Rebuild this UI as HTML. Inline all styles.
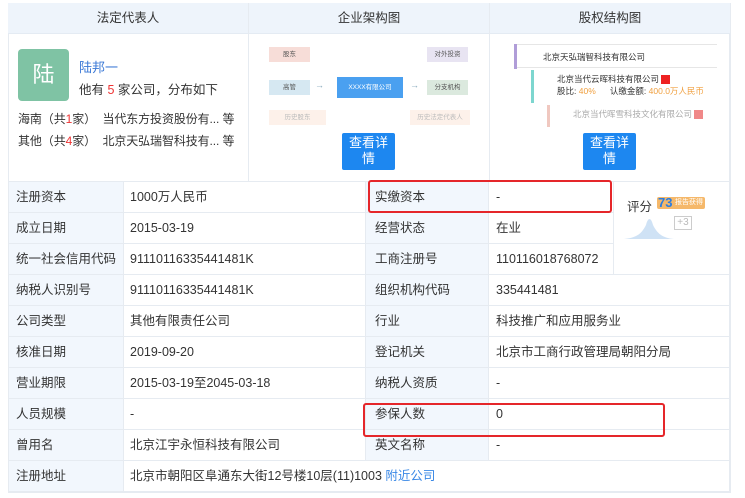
<!DOCTYPE html>
<html><head><meta charset="utf-8"><style>
body{margin:0;width:745px;height:498px;background:#fff;font-family:"Liberation Sans","Noto Sans CJK SC",sans-serif;font-size:12.5px;color:#333;overflow:hidden;position:relative}
.a{position:absolute}
.hd{top:3px;height:30px;background:#eef4fb;border-bottom:1px solid #e4ebf3;line-height:30px;text-align:center;font-size:12.5px;color:#333}
.vl{width:1px;background:#e6ebf1}
.hl{height:1px;background:#e6ebf1}
.lab{background:#f2f7fd}
.t{position:absolute;line-height:31px;font-size:12.5px;white-space:nowrap}
.btn{background:#1d87f0;color:#fff;font-size:13px;line-height:16px;text-align:center;padding-top:2px;border-radius:2px}
.box{font-size:6.5px;text-align:center;color:#555;line-height:15px}
</style></head><body>
<div class="a" style="left:8px;top:3px;width:722px;height:490px;border:1px solid #e6ebf1;border-top:none;box-sizing:border-box"></div>
<div class="a hd" style="left:8px;width:240px">法定代表人</div>
<div class="a hd" style="left:249px;width:240px">企业架构图</div>
<div class="a hd" style="left:490px;width:240px">股权结构图</div>
<div class="a vl" style="left:248px;top:3px;height:178px"></div>
<div class="a vl" style="left:489px;top:3px;height:178px"></div>
<div class="a vl" style="left:730px;top:3px;height:490px"></div>

<div class="a" style="left:18px;top:49px;width:51px;height:52px;background:#7fc3a4;border-radius:4px;color:#fff;font-size:22px;line-height:52px;text-align:center">陆</div>
<div class="a" style="left:79px;top:57px;color:#3a78d6;font-size:13px">陆邦一</div>
<div class="a" style="left:79px;top:79px;font-size:12.5px">他有 <span style="color:#e33">5</span> 家公司，分布如下</div>
<div class="a" style="left:18px;top:110px;font-size:12px;letter-spacing:-0.1px">海南（共<span style="color:#e33">1</span>家）&nbsp; 当代东方投资股份有... 等</div>
<div class="a" style="left:18px;top:132px;font-size:12px;letter-spacing:-0.1px">其他（共<span style="color:#e33">4</span>家）&nbsp; 北京天弘瑞智科技有... 等</div>

<div class="a box" style="left:269px;top:47px;width:41px;background:#f7ddd8">股东</div>
<div class="a box" style="left:269px;top:80px;width:41px;background:#d6e8f2">高管</div>
<div class="a box" style="left:269px;top:110px;width:57px;background:#fdf1ea;color:#bbb">历史股东</div>
<div class="a" style="left:315px;top:80px;color:#8ab;font-size:9px">→</div>
<div class="a box" style="left:337px;top:77px;width:66px;line-height:21px;background:#4aa0f0;color:#fff">XXXX有限公司</div>
<div class="a" style="left:410px;top:80px;color:#8ab;font-size:9px">→</div>
<div class="a box" style="left:427px;top:47px;width:41px;background:#e8e4f2">对外投资</div>
<div class="a box" style="left:427px;top:80px;width:41px;background:#dbe9de">分支机构</div>
<div class="a box" style="left:410px;top:110px;width:60px;background:#fdf1ea;color:#bbb">历史法定代表人</div>
<div class="a btn" style="left:342px;top:133px;width:53px;height:35px">查看详<br>情</div>

<div class="a" style="left:514px;top:44px;width:3px;height:25px;background:#b09dd8"></div>
<div class="a" style="left:517px;top:44px;width:200px;height:24px;border-top:1px solid #e6e6e6;border-bottom:1px solid #e6e6e6;font-size:8.5px;line-height:24px;padding-left:26px;box-sizing:border-box">北京天弘瑞智科技有限公司</div>
<div class="a" style="left:531px;top:70px;width:3px;height:33px;background:#7dd6cf"></div>
<div class="a" style="left:557px;top:73px;font-size:8.5px;line-height:12px">北京当代云晖科技有限公司 <span style="display:inline-block;width:9px;height:9px;background:#e22;vertical-align:middle"></span><br>股比: <span style="color:#f0a040">40%</span>&nbsp;&nbsp;&nbsp;&nbsp;&nbsp;&nbsp;认缴金额: <span style="color:#f0a040">400.0万人民币</span></div>
<div class="a" style="left:547px;top:105px;width:3px;height:22px;background:#f0c8c0"></div>
<div class="a" style="left:573px;top:108px;font-size:8.5px;color:#aaa">北京当代晖雪科技文化有限公司 <span style="display:inline-block;width:9px;height:9px;background:#f08888;vertical-align:middle"></span></div>
<div class="a btn" style="left:583px;top:133px;width:53px;height:35px">查看详<br>情</div>

<div class="a lab" style="left:9px;top:181px;width:114px;height:311px"></div>
<div class="a lab" style="left:365px;top:181px;width:123px;height:279px"></div>
<div class="a vl" style="left:123px;top:181px;height:311px"></div>
<div class="a vl" style="left:365px;top:181px;height:279px"></div>
<div class="a vl" style="left:488px;top:181px;height:279px"></div>
<div class="a vl" style="left:613px;top:181px;height:93px"></div>
<div class="a hl" style="left:8px;top:181px;width:722px"></div>
<div class="a hl" style="left:8px;top:212px;width:605px"></div>
<div class="a hl" style="left:8px;top:243px;width:605px"></div>
<div class="a hl" style="left:8px;top:274px;width:722px"></div>
<div class="a hl" style="left:8px;top:305px;width:722px"></div>
<div class="a hl" style="left:8px;top:336px;width:722px"></div>
<div class="a hl" style="left:8px;top:367px;width:722px"></div>
<div class="a hl" style="left:8px;top:398px;width:722px"></div>
<div class="a hl" style="left:8px;top:429px;width:722px"></div>
<div class="a hl" style="left:8px;top:460px;width:722px"></div>
<div class="a hl" style="left:8px;top:491px;width:722px"></div>

<div class="t" style="left:16px;top:182px">注册资本</div><div class="t" style="left:130px;top:182px">1000万人民币</div><div class="t" style="left:375px;top:182px">实缴资本</div><div class="t" style="left:496px;top:182px">-</div>
<div class="t" style="left:16px;top:213px">成立日期</div><div class="t" style="left:130px;top:213px">2015-03-19</div><div class="t" style="left:375px;top:213px">经营状态</div><div class="t" style="left:496px;top:213px">在业</div>
<div class="t" style="left:16px;top:244px">统一社会信用代码</div><div class="t" style="left:130px;top:244px">91110116335441481K</div><div class="t" style="left:375px;top:244px">工商注册号</div><div class="t" style="left:496px;top:244px">110116018768072</div>
<div class="t" style="left:16px;top:275px">纳税人识别号</div><div class="t" style="left:130px;top:275px">91110116335441481K</div><div class="t" style="left:375px;top:275px">组织机构代码</div><div class="t" style="left:496px;top:275px">335441481</div>
<div class="t" style="left:16px;top:306px">公司类型</div><div class="t" style="left:130px;top:306px">其他有限责任公司</div><div class="t" style="left:375px;top:306px">行业</div><div class="t" style="left:496px;top:306px">科技推广和应用服务业</div>
<div class="t" style="left:16px;top:337px">核准日期</div><div class="t" style="left:130px;top:337px">2019-09-20</div><div class="t" style="left:375px;top:337px">登记机关</div><div class="t" style="left:496px;top:337px">北京市工商行政管理局朝阳分局</div>
<div class="t" style="left:16px;top:368px">营业期限</div><div class="t" style="left:130px;top:368px">2015-03-19至2045-03-18</div><div class="t" style="left:375px;top:368px">纳税人资质</div><div class="t" style="left:496px;top:368px">-</div>
<div class="t" style="left:16px;top:399px">人员规模</div><div class="t" style="left:130px;top:399px">-</div><div class="t" style="left:375px;top:399px">参保人数</div><div class="t" style="left:496px;top:399px">0</div>
<div class="t" style="left:16px;top:430px">曾用名</div><div class="t" style="left:130px;top:430px">北京江宇永恒科技有限公司</div><div class="t" style="left:375px;top:430px">英文名称</div><div class="t" style="left:496px;top:430px">-</div>
<div class="t" style="left:16px;top:461px">注册地址</div><div class="t" style="left:130px;top:461px">北京市朝阳区阜通东大街12号楼10层(11)1003 <span style="color:#3a88e6">附近公司</span></div>

<div class="a" style="left:627px;top:196px;font-size:12.5px">评分</div>
<div class="a" style="left:657px;top:197px;width:48px;height:12px;background:#f5b86a;border-radius:2px"></div>
<div class="a" style="left:658px;top:195px;font-size:13px;font-weight:bold;color:#2a7de1;line-height:15px">73</div>
<div class="a" style="left:675px;top:198px;font-size:7px;color:#fff;line-height:10px">报告获得</div>
<svg class="a" style="left:622px;top:213px" width="60" height="30"><path d="M2 26 C15 25 20 20 24 12 C26 4 29 4 31 12 C35 20 40 25 52 26 Z" fill="#cfe2f5"/></svg>
<div class="a" style="left:674px;top:216px;width:16px;height:12px;border:1px solid #ccc;font-size:10px;color:#bbb;line-height:12px;text-align:center">+3</div>

<div class="a" style="left:368px;top:180px;width:244px;height:33px;border:2px solid #e5262a;border-radius:3px;box-sizing:border-box"></div>
<div class="a" style="left:363px;top:403px;width:302px;height:34px;border:2px solid #e5262a;border-radius:3px;box-sizing:border-box"></div>
</body></html>
